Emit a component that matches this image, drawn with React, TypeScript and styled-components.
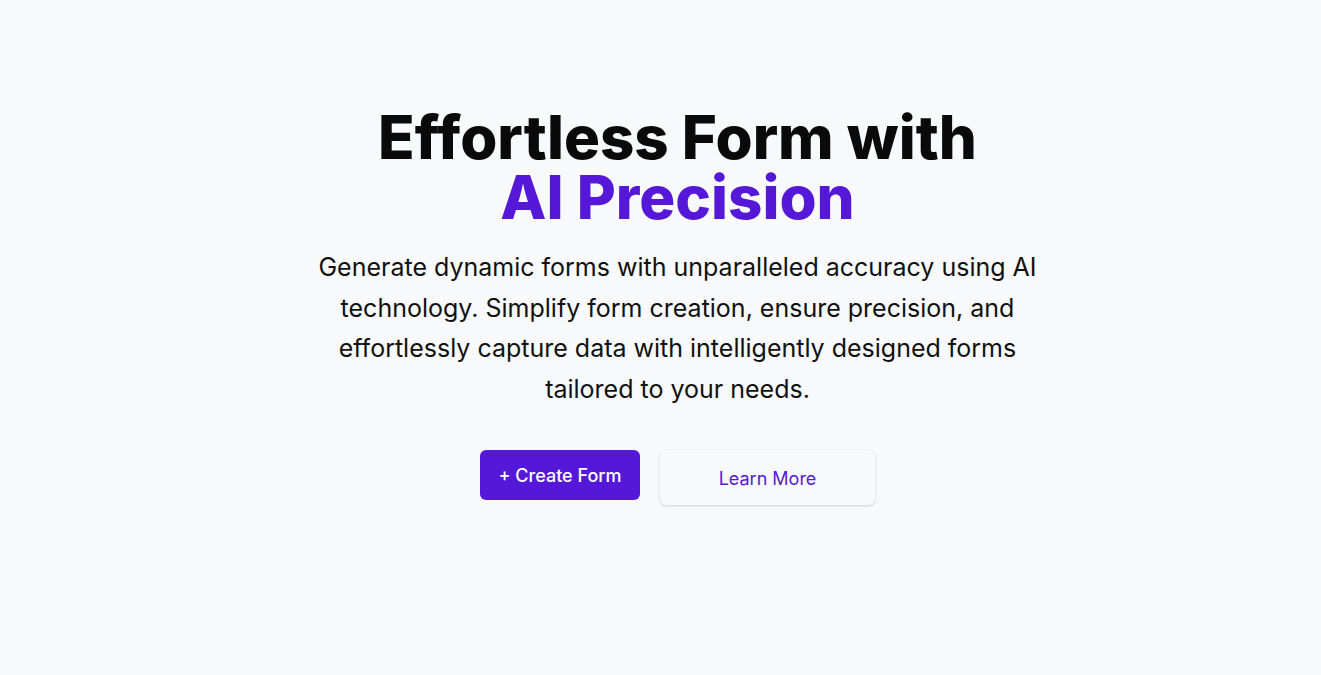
import React from "react";
import styled, { createGlobalStyle } from "styled-components";

const Global = createGlobalStyle`
  html, body { margin: 0; padding: 0; background: #f8f9fb; }
  body { font-family: Inter, "Noto Sans", sans-serif; -webkit-font-smoothing: antialiased; }
  * { box-sizing: border-box; }
`;

const Page = styled.main`
  min-height: 675px;
  display: flex;
  justify-content: center;
  padding-top: 107px;
  padding-left: 34px;
`;

const Hero = styled.section`
  display: flex;
  flex-direction: column;
  align-items: center;
  text-align: center;
  max-width: 760px;
`;

const Title = styled.h1`
  margin: 0;
  font-size: 60px;
  line-height: 60px;
  font-weight: 800;
  color: #0a0a0a;
`;

const Accent = styled.span`
  display: block;
  color: #5518d8;
`;

const Lead = styled.p`
  margin: 20px 0 0;
  font-size: 25px;
  line-height: 40.5px;
  font-weight: 400;
  color: #111;
  max-width: 740px;
`;

const Actions = styled.div`
  display: flex;
  gap: 20px;
  align-items: flex-start;
  margin-top: 41px;
`;

const Primary = styled.button`
  height: 50px;
  width: 160px;
  border: none;
  border-radius: 6px;
  background: #5518d8;
  color: #fff;
  font-family: inherit;
  font-size: 18px;
  font-weight: 500;
  cursor: pointer;
`;

const Secondary = styled.button`
  height: 55px;
  width: 215px;
  border: none;
  border-radius: 6px;
  background: #f8f9fb;
  color: #5518d8;
  font-family: inherit;
  font-size: 18px;
  font-weight: 400;
  padding-top: 3px;
  box-shadow: 0 1px 3px rgba(0, 0, 0, 0.12), 0 1px 2px rgba(0, 0, 0, 0.06);
  cursor: pointer;
`;

export default function App() {
  return (
    <>
      <Global />
      <Page>
        <Hero>
          <Title>
            Effortless Form with
            <Accent>AI Precision</Accent>
          </Title>
          <Lead>
            Generate dynamic forms with unparalleled accuracy using AI technology. Simplify form
            creation, ensure precision, and effortlessly capture data with intelligently designed
            forms tailored to your needs.
          </Lead>
          <Actions>
            <Primary>+ Create Form</Primary>
            <Secondary>Learn More</Secondary>
          </Actions>
        </Hero>
      </Page>
    </>
  );
}
